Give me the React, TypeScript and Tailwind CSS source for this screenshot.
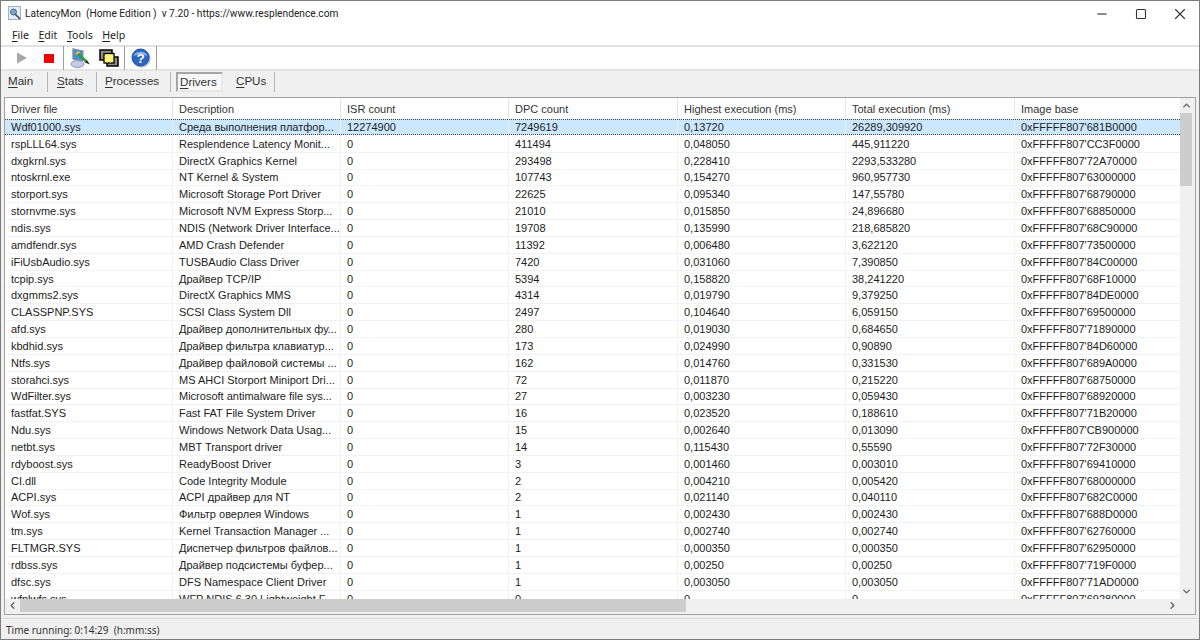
import { Minus, Square, X, ChevronUp, ChevronDown, ChevronLeft, ChevronRight } from "lucide-react";

const rows = [
  ["Wdf01000.sys", "Среда выполнения платфор...", "12274900", "7249619", "0,13720", "26289,309920", "0xFFFFF807'681B0000"],
  ["rspLLL64.sys", "Resplendence Latency Monit...", "0", "411494", "0,048050", "445,911220", "0xFFFFF807'CC3F0000"],
  ["dxgkrnl.sys", "DirectX Graphics Kernel", "0", "293498", "0,228410", "2293,533280", "0xFFFFF807'72A70000"],
  ["ntoskrnl.exe", "NT Kernel & System", "0", "107743", "0,154270", "960,957730", "0xFFFFF807'63000000"],
  ["storport.sys", "Microsoft Storage Port Driver", "0", "22625", "0,095340", "147,55780", "0xFFFFF807'68790000"],
  ["stornvme.sys", "Microsoft NVM Express Storp...", "0", "21010", "0,015850", "24,896680", "0xFFFFF807'68850000"],
  ["ndis.sys", "NDIS (Network Driver Interface...", "0", "19708", "0,135990", "218,685820", "0xFFFFF807'68C90000"],
  ["amdfendr.sys", "AMD Crash Defender", "0", "11392", "0,006480", "3,622120", "0xFFFFF807'73500000"],
  ["iFiUsbAudio.sys", "TUSBAudio Class Driver", "0", "7420", "0,031060", "7,390850", "0xFFFFF807'84C00000"],
  ["tcpip.sys", "Драйвер TCP/IP", "0", "5394", "0,158820", "38,241220", "0xFFFFF807'68F10000"],
  ["dxgmms2.sys", "DirectX Graphics MMS", "0", "4314", "0,019790", "9,379250", "0xFFFFF807'84DE0000"],
  ["CLASSPNP.SYS", "SCSI Class System Dll", "0", "2497", "0,104640", "6,059150", "0xFFFFF807'69500000"],
  ["afd.sys", "Драйвер дополнительных фу...", "0", "280", "0,019030", "0,684650", "0xFFFFF807'71890000"],
  ["kbdhid.sys", "Драйвер фильтра клавиатур...", "0", "173", "0,024990", "0,90890", "0xFFFFF807'84D60000"],
  ["Ntfs.sys", "Драйвер файловой системы ...", "0", "162", "0,014760", "0,331530", "0xFFFFF807'689A0000"],
  ["storahci.sys", "MS AHCI Storport Miniport Dri...", "0", "72", "0,011870", "0,215220", "0xFFFFF807'68750000"],
  ["WdFilter.sys", "Microsoft antimalware file sys...", "0", "27", "0,003230", "0,059430", "0xFFFFF807'68920000"],
  ["fastfat.SYS", "Fast FAT File System Driver", "0", "16", "0,023520", "0,188610", "0xFFFFF807'71B20000"],
  ["Ndu.sys", "Windows Network Data Usag...", "0", "15", "0,002640", "0,013090", "0xFFFFF807'CB900000"],
  ["netbt.sys", "MBT Transport driver", "0", "14", "0,115430", "0,55590", "0xFFFFF807'72F30000"],
  ["rdyboost.sys", "ReadyBoost Driver", "0", "3", "0,001460", "0,003010", "0xFFFFF807'69410000"],
  ["CI.dll", "Code Integrity Module", "0", "2", "0,004210", "0,005420", "0xFFFFF807'68000000"],
  ["ACPI.sys", "ACPI драйвер для NT", "0", "2", "0,021140", "0,040110", "0xFFFFF807'682C0000"],
  ["Wof.sys", "Фильтр оверлея Windows", "0", "1", "0,002430", "0,002430", "0xFFFFF807'688D0000"],
  ["tm.sys", "Kernel Transaction Manager ...", "0", "1", "0,002740", "0,002740", "0xFFFFF807'62760000"],
  ["FLTMGR.SYS", "Диспетчер фильтров файлов...", "0", "1", "0,000350", "0,000350", "0xFFFFF807'62950000"],
  ["rdbss.sys", "Драйвер подсистемы буфер...", "0", "1", "0,00250", "0,00250", "0xFFFFF807'719F0000"],
  ["dfsc.sys", "DFS Namespace Client Driver", "0", "1", "0,003050", "0,003050", "0xFFFFF807'71AD0000"],
  ["wfplwfs.sys", "WFP NDIS 6.30 Lightweight F...", "0", "0", "0", "0", "0xFFFFF807'69280000"],
];

const headers = ["Driver file", "Description", "ISR count", "DPC count", "Highest execution (ms)", "Total execution (ms)", "Image base"];

const gridCols = "grid grid-cols-[168px_168px_168px_169px_168px_169px_166px]";

function Mnemonic({ first, rest }: { first: string; rest: string }) {
  return (
    <span>
      <span className="underline underline-offset-2">{first}</span>
      {rest}
    </span>
  );
}

function AppIcon() {
  return (
    <svg width="14" height="15" viewBox="0 0 14 15">
      <rect x="0.5" y="0.5" width="12" height="13" fill="#e6edf4" stroke="#9db0c4" />
      <circle cx="5.5" cy="6" r="3" fill="#7fa6c9" stroke="#4d6c8a" />
      <path d="M7 8l5 5" stroke="#3d4a58" strokeWidth="1.6" />
    </svg>
  );
}

function PlayIcon() {
  return (
    <svg width="12" height="12" viewBox="0 0 12 12">
      <path d="M1 0.5L11 6L1 11.5Z" fill="#a8a8a8" />
    </svg>
  );
}

function MonitorIcon() {
  return (
    <svg width="21" height="20" viewBox="0 0 21 20">
      <path d="M3 1l10 2-.5 10-9.500-2z" fill="#3f8fd8" stroke="#8391a5" strokeWidth="1.400" />
      <path d="M5 5l4-2 1.500 2-4 2z" fill="#eeb84a" />
      <ellipse cx="7.500" cy="16" rx="6.500" ry="3.500" fill="#c3cbe6" stroke="#8d96bd" />
      <path d="M8 6l9 8" stroke="#2f9a35" strokeWidth="2.600" />
      <path d="M17 12.500l-2 2 5 2z" fill="#222" />
    </svg>
  );
}

function WindowsIcon() {
  return (
    <svg width="20" height="18" viewBox="0 0 20 18">
      <rect x="1" y="1" width="12" height="10" fill="#8a8a8a" stroke="#000" strokeWidth="1.500" />
      <rect x="8" y="8" width="11" height="9" fill="#8a8a8a" stroke="#000" strokeWidth="1.500" />
      <rect x="5" y="4.500" width="10" height="9.500" fill="#fdf65a" stroke="#000" strokeWidth="1.300" />
      <path d="M8.500 5v9M11.500 5v9M5.500 7.700h9M5.500 10.700h9" stroke="#f7f7c0" strokeWidth="0.600" />
    </svg>
  );
}

function HelpIcon() {
  return (
    <svg width="20" height="20" viewBox="0 0 20 20">
      <circle cx="10.500" cy="10.500" r="9.200" fill="#bfc3ca" />
      <circle cx="9.500" cy="9.500" r="8.500" fill="#2c66c4" stroke="#1c4ea3" />
      <path d="M2.500 8a7.500 6.500 0 0 1 14 0a11 7 0 0 0-14 0z" fill="#8db4ea" />
      <text x="9.500" y="14.500" textAnchor="middle" fontSize="13.500" fontWeight="700" fontFamily="Liberation Sans, sans-serif" fill="#fff">
        ?
      </text>
    </svg>
  );
}

function ToolbarSep() {
  return <div className="mx-[2px] h-[24px] w-px bg-[#a0a0a0]" />;
}

export default function App() {
  return (
    <div className="flex h-[640px] w-[1200px] flex-col overflow-hidden border border-[#7d7d7d] bg-[#f0f0f0] font-['Liberation_Sans',sans-serif] text-[11px] text-[#1c1c1c]">
      <div className="flex h-[25px] items-center bg-white pl-[7px] font-['Roboto',sans-serif] text-[10.2px] text-[#222]">
        <AppIcon />
        <span className="ml-[3px] whitespace-pre">LatencyMon  (Home Edition )  v 7.20 - https://www.resplendence.com</span>
        <div className="ml-auto flex items-center text-[#333]">
          <div className="flex w-[38px] justify-center">
            <Minus size={14} strokeWidth={2.6} color="#666" />
          </div>
          <div className="mx-[1px] flex w-[38px] justify-center">
            <Square size={12} strokeWidth={2.2} />
          </div>
          <div className="flex w-[38px] justify-center">
            <X size={18} strokeWidth={1.5} />
          </div>
        </div>
      </div>

      <div className="flex h-[21px] items-center gap-[9.5px] border-b-2 border-[#e2e2e2] bg-white pl-[11px] font-['Noto_Sans',sans-serif] text-[10.6px]">
        <Mnemonic first="F" rest="ile" />
        <Mnemonic first="E" rest="dit" />
        <Mnemonic first="T" rest="ools" />
        <Mnemonic first="H" rest="elp" />
      </div>

      <div className="flex h-[24px] items-center border-b-2 border-[#e4e4e4] bg-white pl-[15px]">
        <div className="flex w-[26px] justify-start">
          <PlayIcon />
        </div>
        <div className="ml-[2px] h-[9px] w-[10px] bg-[#f00000]" />
        <div className="w-[7px]" />
        <ToolbarSep />
        <div className="flex w-[29px] justify-center">
          <MonitorIcon />
        </div>
        <div className="flex w-[27px] justify-center">
          <WindowsIcon />
        </div>
        <ToolbarSep />
        <div className="flex w-[27px] justify-center">
          <HelpIcon />
        </div>
        <ToolbarSep />
      </div>

      <div className="flex h-[24px] items-start pt-[1px] pl-[7px] text-[11.6px] text-[#333]">
        <div className="flex h-[20px] w-[40px] items-center border-r border-[#b5b5b5] pb-[2px]">
          <Mnemonic first="M" rest="ain" />
        </div>
        <div className="flex h-[20px] w-[49px] items-center border-r border-[#b5b5b5] pb-[2px] pl-[9px]">
          <Mnemonic first="S" rest="tats" />
        </div>
        <div className="flex h-[20px] w-[74px] items-center border-r border-[#b5b5b5] pb-[2px] pl-[8px]">
          <Mnemonic first="P" rest="rocesses" />
        </div>
        <div className="ml-[5px] flex h-[20px] w-[47px] items-center border-2 border-[#a6a6a6] border-r-[#e8e8e8] border-b-[#e8e8e8] bg-[#f7f7f7] pl-[2px]">
          <Mnemonic first="D" rest="rivers" />
        </div>
        <div className="flex h-[20px] w-[52px] items-center border-r border-[#b5b5b5] pb-[2px] pl-[13px]">
          <Mnemonic first="C" rest="PUs" />
        </div>
      </div>

      <div className="mx-[3px] mt-[2px] flex h-[518px] flex-col border border-[#a0a0a0] bg-white">
        <div className="flex min-h-0 flex-1">
          <div className="min-w-0 flex-1 overflow-hidden">
            <div className={gridCols + " h-[21px] items-center text-[#333]"}>
              {headers.map((h) => (
                <div key={h} className="flex h-full items-center border-r border-[#e5e5e5] pl-[6px] pt-[2px]">
                  {h}
                </div>
              ))}
            </div>
            {rows.map((row, i) => (
              <div
                key={row[0]}
                className={
                  i === 0
                    ? gridCols + " mb-[1px] h-[15.85px] items-center border-y border-dotted border-[#444] bg-[#cce8ff]"
                    : gridCols + " h-[16.85px] items-center border-b border-[#f2f2f2]"
                }
              >
                {row.map((cell, j) => (
                  <div key={j} className="whitespace-nowrap border-r border-[#f0f0f0] pl-[6px] leading-[14px]">
                    {cell}
                  </div>
                ))}
              </div>
            ))}
          </div>
          <div className="flex w-[15px] flex-none flex-col items-start bg-[#f0f0f0]">
            <div className="flex h-[15px] w-[12px] items-center justify-center">
              <ChevronUp size={11} strokeWidth={3} color="#606060" />
            </div>
            <div className="h-[73px] w-[12px] bg-[#cdcdcd]" />
            <div className="flex-1" />
            <div className="flex h-[15px] w-[12px] items-center justify-center">
              <ChevronDown size={11} strokeWidth={3} color="#606060" />
            </div>
          </div>
        </div>
        <div className="flex h-[15px] flex-none items-start bg-[#f0f0f0]">
          <div className="flex h-[12px] w-[15px] items-center justify-center">
            <ChevronLeft size={11} strokeWidth={3} color="#606060" />
          </div>
          <div className="h-[12.5px] w-[666px] bg-[#cdcdcd]" />
          <div className="flex-1" />
          <div className="flex h-[12px] w-[15px] items-center justify-center">
            <ChevronRight size={11} strokeWidth={3} color="#606060" />
          </div>
          <div className="w-[15px]" />
        </div>
      </div>

      <div className="mt-[3px] flex flex-1 items-center border-t border-[#dcdcdc] pl-[5px] pt-[2px] font-['Noto_Sans',sans-serif] text-[10px] text-[#333]">
        <span className="whitespace-pre">Time running: 0:14:29  (h:mm:ss)</span>
      </div>
    </div>
  );
}
